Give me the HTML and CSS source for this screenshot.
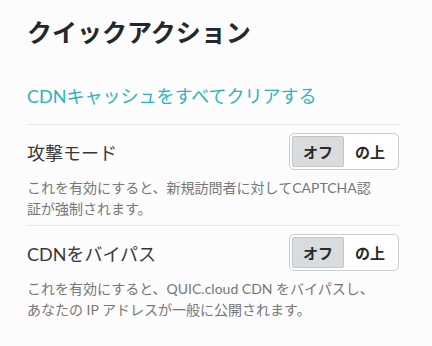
FILE: index.html
```html
<!DOCTYPE html>
<html lang="ja">
<head>
<meta charset="utf-8">
<link rel="stylesheet" href="styles.css">
</head>
<body>
<div class="panel">
  <h2 class="title">クイックアクション</h2>
  <a class="link" href="#">CDNキャッシュをすべてクリアする</a>
  <div class="row">
    <div class="row-head">
      <span class="label">攻撃モード</span>
      <div class="toggle"><span class="opt active">オフ</span><span class="opt">の上</span></div>
    </div>
    <p class="desc">これを有効にすると、新規訪問者に対してCAPTCHA認<br>証が強制されます。</p>
  </div>
  <div class="row">
    <div class="row-head">
      <span class="label">CDNをバイパス</span>
      <div class="toggle"><span class="opt active">オフ</span><span class="opt">の上</span></div>
    </div>
    <p class="desc">これを有効にすると、QUIC.cloud CDN をバイパスし、<br>あなたの IP アドレスが一般に公開されます。</p>
  </div>
</div>
</body>
</html>
```

FILE: styles.css
```css
html, body {
  margin: 0;
  padding: 0;
  background: #fcfcfc;
}
body {
  font-family: Lato, "Noto Sans CJK JP", sans-serif;
  color: #333;
}
.panel {
  width: 372px;
  padding: 14px 0 0 27px;
}
.title {
  margin: 0;
  font-size: 25px;
  font-weight: 700;
  line-height: 36px;
  color: #23282d;
}
.link {
  display: block;
  margin-top: 34px;
  font-size: 18px;
  line-height: 24px;
  color: #2cb3c1;
  text-decoration: none;
  padding-bottom: 16px;
}
.row {
  border-top: 1px solid #e8e8e8;
  padding-top: 8px;
}
.row-head {
  display: flex;
  justify-content: space-between;
  align-items: center;
}
.label {
  font-size: 18px;
  color: #383838;
}
.toggle {
  display: flex;
  border: 1px solid #c8cbcf;
  border-radius: 5px;
  padding: 2px;
  background: #fff;
}
.opt {
  width: 52px;
  height: 31px;
  display: flex;
  align-items: center;
  justify-content: center;
  font-size: 15px;
  font-weight: 700;
  color: #2a2a2a;
  box-sizing: border-box;
}
.opt.active {
  background: #d9dcdf;
  border: 1px solid #c2c5c9;
  border-radius: 2px;
}
.desc {
  margin: 7px 0 6px;
  font-size: 14px;
  line-height: 21px;
  color: #777;
  white-space: nowrap;
}
```
